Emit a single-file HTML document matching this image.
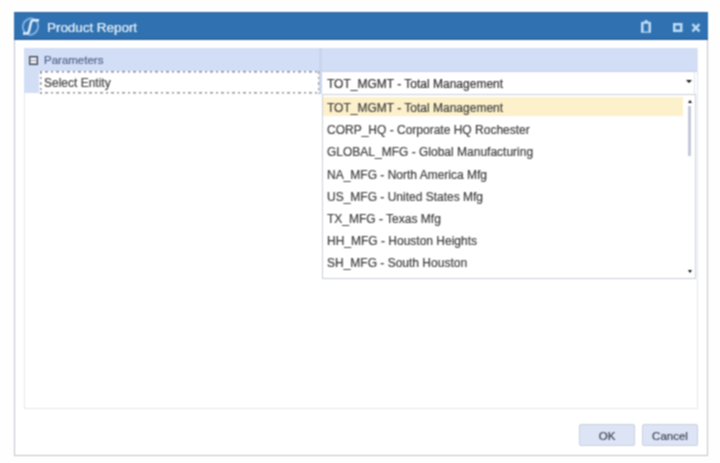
<!DOCTYPE html>
<html><head><meta charset="utf-8">
<style>
*{margin:0;padding:0;box-sizing:border-box}
html,body{width:720px;height:463px;overflow:hidden;background:#fefefe;font-family:"Liberation Sans",sans-serif;position:relative}
#ttext,#ptext,#ltext,#ctext,.item,.btn{-webkit-text-stroke:0.2px currentColor}
#root{position:absolute;left:0;top:0;width:720px;height:463px;filter:url(#bl)}
.abs{position:absolute}
#win{left:14px;top:12px;width:694px;height:444px;border:1px solid #bfc3cc;background:#fff}
#title{left:14px;top:12px;width:694px;height:28.4px;background:#3072b1;box-shadow:inset 0 1px 0 #2c66a3,inset 0 -2px 0 #2e67a2}
#ttext{left:47px;top:20px;font-size:13.6px;letter-spacing:-0.1px;color:#e8f1fb;white-space:nowrap;line-height:16px}
#panel{left:24px;top:48px;width:674px;height:361px;border:1px solid #e3e6ed;background:#fff}
#hdr{left:24px;top:48px;width:673px;height:23px;background:#d2ddf6}
#hline{left:322px;top:71px;width:375px;height:1px;background:#c6d0e6}
#gut{left:24px;top:71px;width:15px;height:22px;background:#d2ddf6}
#minus{left:29px;top:56px;width:9px;height:9px;border:1px solid #3d424b;box-shadow:inset 0 0 0 1px #a9aeb7;background:#f3f5f9}
#minus::after{content:"";position:absolute;left:1px;top:3px;width:5px;height:1px;background:#9a9fa8}
#ptext{left:44px;top:53px;font-size:11.5px;color:#58668a;white-space:nowrap;line-height:14px}
#lab{left:40px;top:71px;width:279px;height:22.8px;background:repeating-linear-gradient(90deg,#858c9c 0 2.5px,transparent 2.5px 5.5px) left top/100% 1.5px no-repeat,repeating-linear-gradient(90deg,#8f9298 0 2.5px,transparent 2.5px 5.5px) left bottom/100% 1.5px no-repeat,repeating-linear-gradient(180deg,#8f9298 0 2.5px,transparent 2.5px 5.5px) left top/1.5px 100% no-repeat,repeating-linear-gradient(180deg,#8f9298 0 2.5px,transparent 2.5px 5.5px) right top/1.5px 100% no-repeat}
#ltext{left:44px;top:76px;font-size:12px;color:#444;white-space:nowrap;line-height:14px}
#sep{left:319px;top:48px;width:3px;height:45.5px;background:#cad5ec}
#combo{left:322px;top:72px;width:373px;height:22px;background:#fff;border-right:1px solid #e2e5ec}
#ctext{left:327px;top:77px;font-size:12px;color:#333;white-space:nowrap;line-height:14px}
#carrow{left:686px;top:80px;width:0;height:0;border-left:3px solid transparent;border-right:3px solid transparent;border-top:3.5px solid #111}
#list{left:322px;top:94px;width:374px;height:185px;border:1px solid #c9ced8;background:#fff}
.item{position:absolute;left:327px;font-size:12px;color:#404040;white-space:nowrap;line-height:14px}
#hl{left:323px;top:97px;width:360px;height:19px;background:#fdf1cb}
#sup{left:688px;top:100px;width:0;height:0;border-left:2px solid transparent;border-right:2px solid transparent;border-bottom:3px solid #111}
#sdn{left:688px;top:270px;width:0;height:0;border-left:2px solid transparent;border-right:2px solid transparent;border-top:3px solid #111}
#thumb{left:688px;top:106px;width:3px;height:50px;background:#c4c9da}
.btn{position:absolute;top:424px;padding-top:1px;height:22px;background:#dde4f5;border:1px solid #c8cedc;border-radius:2px;font-size:11.5px;color:#3e4556;text-align:center;line-height:20px}
</style></head><body><svg width="0" height="0" style="position:absolute"><filter id="bl" x="0" y="0" width="100%" height="100%" color-interpolation-filters="sRGB"><feConvolveMatrix order="3" kernelMatrix="1 2 1 2 4 2 1 2 1" divisor="16" edgeMode="duplicate"/></filter></svg><div id="root">
<div id="win" class="abs"></div>
<div id="title" class="abs"></div>
<svg class="abs" style="left:18px;top:14px" width="26" height="24" viewBox="0 0 26 24">
  <ellipse cx="12.5" cy="12.6" rx="7.6" ry="8.2" transform="rotate(22 12.6 12.6)" fill="none" stroke="#8ab5e6" stroke-width="1.7"/>
  <path d="M21 6.2 L15.5 6.2 C14 6.2 13.4 7 13 8.5 L11 17 C10.6 18.6 10 19.6 8.5 19.6 L5 19.6" fill="none" stroke="#dcecfc" stroke-width="2.5" stroke-linejoin="round"/>
</svg>
<div id="ttext" class="abs">Product Report</div>
<svg class="abs" style="left:630px;top:12px" width="78" height="28" viewBox="630 12 78 28">
  <path fill-rule="evenodd" fill="#bcdaf6" d="M641 32.8 V23.2 Q641 21.8 642.4 21.8 L644.2 21.8 L645.3 19.9 L647.1 19.9 L648.2 21.8 L649.7 21.8 Q651 21.8 651 23.2 V32.8 Z M643.6 31.4 V23.8 H648.4 V31.4 Z"/>
  <rect x="674.25" y="24.25" width="7" height="6.5" fill="none" stroke="#bcdaf6" stroke-width="2.5"/>
  <path d="M692.4 24.2 L699.4 31.4 M699.4 24.2 L692.4 31.4" stroke="#bcdaf6" stroke-width="2.4"/>
</svg>
<div id="panel" class="abs"></div>
<div id="hdr" class="abs"></div>
<div id="gut" class="abs"></div>
<div id="hline" class="abs"></div>
<div id="minus" class="abs"></div>
<div id="ptext" class="abs">Parameters</div>
<div id="lab" class="abs"></div>
<div id="ltext" class="abs">Select Entity</div>
<div id="sep" class="abs"></div>
<div id="combo" class="abs"></div>
<div id="ctext" class="abs">TOT_MGMT - Total Management</div>
<div id="carrow" class="abs"></div>
<div id="list" class="abs"></div>
<div id="hl" class="abs"></div>
<div class="item" style="top:101px">TOT_MGMT - Total Management</div>
<div class="item" style="top:123px">CORP_HQ - Corporate HQ Rochester</div>
<div class="item" style="top:145px">GLOBAL_MFG - Global Manufacturing</div>
<div class="item" style="top:168px">NA_MFG - North America Mfg</div>
<div class="item" style="top:190px">US_MFG - United States Mfg</div>
<div class="item" style="top:212px">TX_MFG - Texas Mfg</div>
<div class="item" style="top:234px">HH_MFG - Houston Heights</div>
<div class="item" style="top:256px">SH_MFG - South Houston</div>
<div id="sup" class="abs"></div>
<div id="thumb" class="abs"></div>
<div id="sdn" class="abs"></div>
<div class="btn" style="left:579px;width:56px">OK</div>
<div class="btn" style="left:642px;width:56px">Cancel</div>
</div></body></html>
